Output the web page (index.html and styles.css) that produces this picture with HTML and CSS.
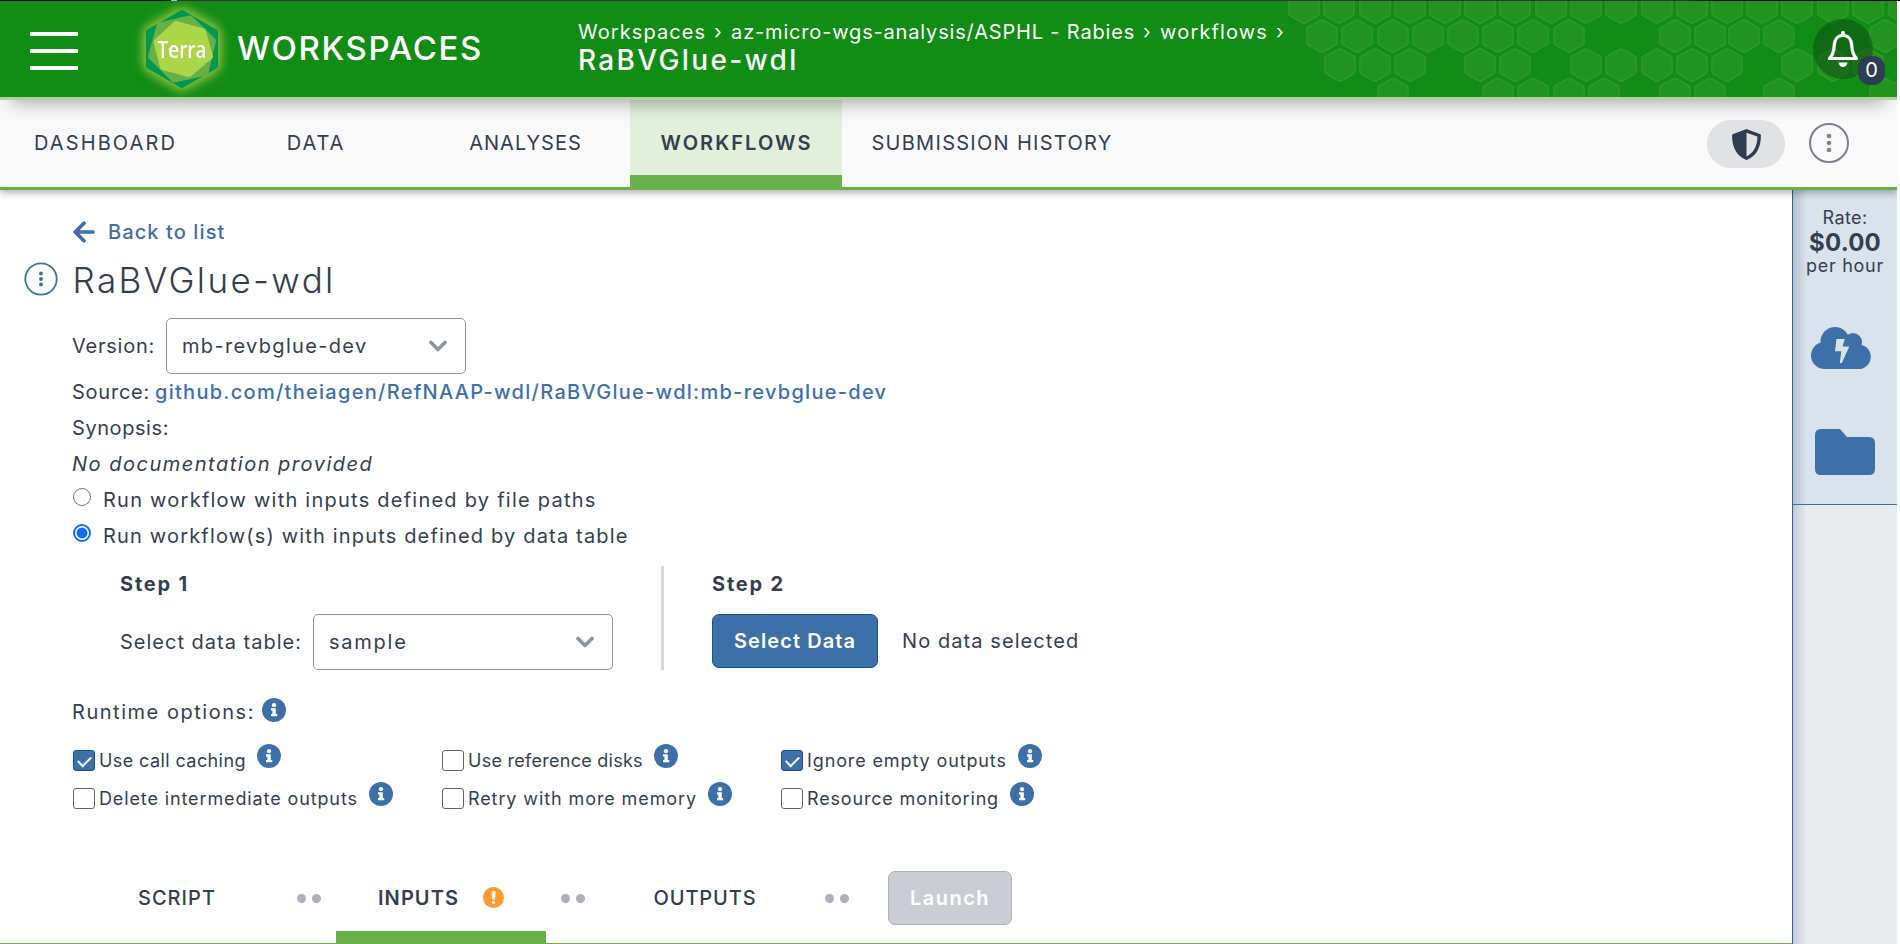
FILE: index.html
```html
<!DOCTYPE html>
<html lang="en">
<head>
<meta charset="utf-8">
<title>RaBVGlue-wdl</title>
<link rel="stylesheet" href="styles.css">
</head>
<body>
<svg width="0" height="0" class="defs">
  <defs>
    <path id="hex" d="M0 -16.2 Q1 -16.2 2 -15.7 L13.5 -9.2 Q15.3 -8.1 15.3 -6.2 V6.2 Q15.3 8.1 13.5 9.2 L2 15.7 Q0 16.8 -2 15.7 L-13.5 9.2 Q-15.3 8.1 -15.3 6.2 V-6.2 Q-15.3 -8.1 -13.5 -9.2 L-2 -15.7 Q-1 -16.2 0 -16.2Z"/>
    <symbol id="info" viewBox="0 0 24 24"><circle cx="12" cy="12" r="12" fill="#3d70a8"/><circle cx="12" cy="7.2" r="2.1" fill="#fff"/><path d="M9 10.3h4.8v5.6h1.400v2.300H9v-2.300h1.400v-3.300H9z" fill="#fff"/></symbol>
    <symbol id="chev" viewBox="0 0 18 12"><path d="M2 2.5 9 9.5 16 2.5" fill="none" stroke="#8d95a2" stroke-width="3.6" stroke-linecap="round" stroke-linejoin="round"/></symbol>
    <symbol id="kebab" viewBox="0 0 40 40"><circle cx="20" cy="20" r="19" fill="none" stroke="currentColor" stroke-width="2"/><circle cx="20" cy="13" r="2.3" fill="currentColor"/><circle cx="20" cy="20" r="2.3" fill="currentColor"/><circle cx="20" cy="27" r="2.3" fill="currentColor"/></symbol>
  </defs>
</svg>
<div class="strip"></div>
<div class="app">
  <header class="header">
    <svg class="hexes" width="617" height="96" viewBox="1280 1 617 96">
      <g transform="translate(0 7)"><use href="#hex" x="1304"/><use href="#hex" x="1339"/><use href="#hex" x="1375"/><use href="#hex" x="1410"/><use href="#hex" x="1445"/><use href="#hex" x="1480"/><use href="#hex" x="1515"/><use href="#hex" x="1551"/><use href="#hex" x="1586"/><use href="#hex" x="1621"/><use href="#hex" x="1657"/><use href="#hex" x="1692"/><use href="#hex" x="1727"/><use href="#hex" x="1762"/><use href="#hex" x="1797"/><use href="#hex" x="1833"/><use href="#hex" x="1868"/><use href="#hex" x="1904"/></g>
      <g transform="translate(0 36)"><use href="#hex" x="1322"/><use href="#hex" x="1357"/><use href="#hex" x="1393"/><use href="#hex" x="1428"/><use href="#hex" x="1463"/><use href="#hex" x="1498"/><use href="#hex" x="1533"/><use href="#hex" x="1569"/><use href="#hex" x="1675"/><use href="#hex" x="1710"/><use href="#hex" x="1744"/><use href="#hex" x="1779"/><use href="#hex" x="1885"/></g>
      <g transform="translate(0 65)"><use href="#hex" x="1340"/><use href="#hex" x="1375"/><use href="#hex" x="1410"/><use href="#hex" x="1480"/><use href="#hex" x="1515"/><use href="#hex" x="1586"/><use href="#hex" x="1621"/><use href="#hex" x="1657"/><use href="#hex" x="1692"/><use href="#hex" x="1727"/><use href="#hex" x="1797"/><use href="#hex" x="1833"/><use href="#hex" x="1868"/></g>
      <g transform="translate(0 94.5)"><use href="#hex" x="1393"/><use href="#hex" x="1498"/><use href="#hex" x="1533"/><use href="#hex" x="1569"/><use href="#hex" x="1604"/><use href="#hex" x="1675"/><use href="#hex" x="1710"/><use href="#hex" x="1779"/><use href="#hex" x="1885"/></g>
    </svg>
    <div class="burger"><i></i><i></i><i></i></div>
    <svg class="logo" width="72" height="80" viewBox="0 0 72 80">
      <g stroke-width="6" stroke-linejoin="round">
        <path d="M36 4 69 23V57L36 76 3 57V23Z" fill="#00984f" stroke="#00984f"/>
        <path d="M13.500 16.500 44 9.500 67 32 59.500 63.500 28 70.500 5 47.500Z" fill="#67b047" stroke="#67b047"/>
        <path d="M30 15 57 22.500 64 47.500 43 65 17 58 10.500 33Z" fill="#acd548" stroke="#acd548"/>
      </g>
      <text x="11.500" y="49" textLength="49" lengthAdjust="spacingAndGlyphs">Terra</text>
    </svg>
    <div class="brand">WORKSPACES</div>
    <div class="crumbs">
      <div class="trail"><span class="c1">Workspaces</span><span class="sep">›</span><span class="c2">az-micro-wgs-analysis/ASPHL - Rabies</span><span class="sep">›</span><span class="c3">workflows</span><span class="sep">›</span></div>
      <div class="current">RaBVGlue-wdl</div>
    </div>
    <div class="bell">
      <svg width="34" height="38" viewBox="0 0 34 38"><path d="M17 5.500C11 5.500 8.500 10 8.300 15 8 21 6.500 25.500 3.500 28.500H30.500C27.500 25.500 26 21 25.700 15 25.500 10 23 5.500 17 5.500Z" fill="none" stroke="#fff" stroke-width="3.200" stroke-linejoin="round"/><path d="M17 2.600V5" stroke="#fff" stroke-width="3.800" stroke-linecap="round"/><path d="M12.500 32.500H21.500Q20.500 37 17 37T12.500 32.500Z" fill="#fff"/></svg>
      <span class="count">0</span>
    </div>
  </header>
  <nav class="nav">
    <a class="tab n1">DASHBOARD</a><a class="tab n2">DATA</a><a class="tab n3">ANALYSES</a><a class="tab n4 active">WORKFLOWS</a><a class="tab n5">SUBMISSION HISTORY</a>
    <div class="shield"><svg width="29" height="31" viewBox="0 0 29 31"><path d="M14.500 1.800 27.200 6.500C27.200 18 23 25.500 14.500 29.200 6 25.500 1.800 18 1.800 6.500Z" fill="none" stroke="#2e3d51" stroke-width="3.400" stroke-linejoin="round"/><path d="M14.500 1V30C6 26 1.500 18 1.500 6.500Z" fill="#2e3d51"/></svg></div>
    <svg class="menu" width="40" height="40"><use href="#kebab"/></svg>
  </nav>
  <div class="body">
    <main class="main">
      <a class="back"><svg width="22" height="22" viewBox="0 0 22 22"><path d="M11 2.200 2.200 11 11 19.800M2.500 11H20" fill="none" stroke="#3d70a8" stroke-width="3.700" stroke-linecap="round" stroke-linejoin="round"/></svg><span>Back to list</span></a>
      <div class="heading"><svg class="wmenu" width="34" height="34" viewBox="0 0 34 34"><circle cx="17" cy="17" r="15.700" fill="none" stroke="#3d70a8" stroke-width="1.800"/><circle cx="17" cy="11.500" r="1.900" fill="#3d70a8"/><circle cx="17" cy="17" r="1.900" fill="#3d70a8"/><circle cx="17" cy="22.500" r="1.900" fill="#3d70a8"/></svg><h1>RaBVGlue-wdl</h1></div>
      <div class="field version"><label>Version:</label><div class="select"><span class="v1">mb-revbglue-dev</span><svg width="18" height="12"><use href="#chev"/></svg></div></div>
      <div class="line"><span class="src">Source:</span><a class="link">github.com/theiagen/RefNAAP-wdl/RaBVGlue-wdl:mb-revbglue-dev</a></div>
      <div class="line syn">Synopsis:</div>
      <div class="line nodoc">No documentation provided</div>
      <div class="line option r1"><i class="radio"></i><span>Run workflow with inputs defined by file paths</span></div>
      <div class="line option r2"><i class="radio on"></i><span>Run workflow(s) with inputs defined by data table</span></div>
      <div class="steps">
        <section class="step one">
          <h2>Step 1</h2>
          <div class="field"><label>Select data table:</label><div class="select"><span class="v2">sample</span><svg width="18" height="12"><use href="#chev"/></svg></div></div>
        </section>
        <section class="step two">
          <h2>Step 2</h2>
          <div class="pick"><button class="primary">Select Data</button><span>No data selected</span></div>
        </section>
      </div>
      <div class="line runtime"><span>Runtime options:</span><svg class="info" width="24" height="24"><use href="#info"/></svg></div>
      <div class="checks">
        <div class="check k1"><i class="box on"></i><span>Use call caching</span><svg class="info" width="24" height="24"><use href="#info"/></svg></div>
        <div class="check k2"><i class="box"></i><span>Use reference disks</span><svg class="info" width="24" height="24"><use href="#info"/></svg></div>
        <div class="check k3"><i class="box on"></i><span>Ignore empty outputs</span><svg class="info" width="24" height="24"><use href="#info"/></svg></div>
        <div class="check k4"><i class="box"></i><span>Delete intermediate outputs</span><svg class="info" width="24" height="24"><use href="#info"/></svg></div>
        <div class="check k5"><i class="box"></i><span>Retry with more memory</span><svg class="info" width="24" height="24"><use href="#info"/></svg></div>
        <div class="check k6"><i class="box"></i><span>Resource monitoring</span><svg class="info" width="24" height="24"><use href="#info"/></svg></div>
      </div>
      <div class="flow">
        <div class="ftab f1">SCRIPT</div>
        <div class="dots"><i></i><i></i></div>
        <div class="ftab f2"><span>INPUTS</span><svg width="21" height="21" viewBox="0 0 21 21"><circle cx="10.500" cy="10.500" r="10.500" fill="#ff9a2e"/><path d="M9 4.500H12L11.600 12H9.400Z" fill="#fff" stroke="#fff" stroke-linejoin="round"/><circle cx="10.500" cy="15.400" r="1.700" fill="#fff"/></svg></div>
        <div class="dots"><i></i><i></i></div>
        <div class="ftab f3">OUTPUTS</div>
        <div class="dots"><i></i><i></i></div>
        <button class="launch" disabled>Launch</button>
      </div>
    </main>
    <aside class="side">
      <div class="panel">
        <div class="rate">Rate:</div>
        <div class="price">$0.00</div>
        <div class="per">per hour</div>
        <svg class="cloud" width="60" height="42" viewBox="0 0 60 42"><g fill="#3d70a8"><circle cx="13.500" cy="28.500" r="13.500"/><circle cx="24" cy="14.500" r="14.500"/><circle cx="42" cy="15" r="9"/><circle cx="47.500" cy="29.700" r="12.300"/><path d="M13.500 16H44L48 25V42H13.500Z"/></g><path d="M25.500 12H33.800L31.500 19.500H38.300L30.800 36H28.800L30.300 24.200H24Z" fill="#d9e3ed"/></svg>
        <svg class="folder" width="60" height="46" viewBox="0 0 60 46"><path d="M6 0H25L32 8H54Q60 8 60 14V40Q60 46 54 46H6Q0 46 0 40V6Q0 0 6 0Z" fill="#3d70a8"/></svg>
      </div>
    </aside>
  </div>
</div>
</body>
</html>
```
FILE: styles.css
```css
* { box-sizing: border-box; }
body { margin: 0; background: #fff; color: #333f50; font: 400 20px/36px Inter, sans-serif; overflow: hidden; }
h1, h2 { margin: 0; }
svg { display: block; flex: none; }
i { display: block; flex: none; }
.defs { position: absolute; }
.strip { height: 1px; background: linear-gradient(90deg, #000 171px, #9bc0e6 171px 177px, #38303a 177px 1686px, #000 1722px); }
.app { width: 1897px; height: 943px; display: flex; flex-direction: column; overflow: hidden; }

.header { position: relative; z-index: 3; height: 99px; flex: none; display: flex; background: #118c15; border-bottom: 3px solid #aed49a; color: #fff; box-shadow: 0 14px 18px -12px rgba(0,0,0,.36); padding-left: 30px; }
.hexes { position: absolute; right: 0; top: 0; fill: #6ab04a; fill-opacity: .2; stroke: #8fc97a; stroke-opacity: .17; stroke-width: 1.5; }
.burger { width: 48px; padding-top: 31px; display: flex; flex-direction: column; gap: 13px; }
.burger i { height: 4px; background: #fff; border-radius: 1px; }
.logo { margin: 8px 0 0 68px; overflow: visible; filter: drop-shadow(0 0 6px #8fc63d) drop-shadow(0 0 4px #7fb93d); }
.logo text { font: 600 24px "Open Sans", sans-serif; fill: #fff; }
.brand { width: 341px; margin-left: 19px; font-size: 33px; font-weight: 500; letter-spacing: 1.66px; line-height: 94px; white-space: nowrap; }
.crumbs { padding-top: 18px; white-space: nowrap; }
.trail { display: flex; line-height: 26px; }
.c1 { letter-spacing: 1.07px; }
.c2 { letter-spacing: .83px; }
.c3 { letter-spacing: 1.15px; }
.sep { width: 17px; margin-left: 8px; }
.current { font-size: 28px; font-weight: 500; letter-spacing: 2.35px; line-height: 30px; }
.bell { position: absolute; right: 24px; top: 18px; width: 60px; height: 60px; padding: 11px 13px; border-radius: 50%; background: rgba(14,78,20,.55); }
.count { position: absolute; left: 45px; top: 37px; width: 27px; height: 29px; border-radius: 12px; background: #2e3d51; text-align: center; line-height: 28px; font-size: 20px; }

.nav { position: relative; z-index: 2; height: 90px; flex: none; display: flex; align-items: center; background: #fafafa; border-bottom: 3px solid #6ab04a; box-shadow: 0 3px 7px rgba(0,0,0,.3); }
.tab { width: 210px; height: 87px; line-height: 87px; text-align: center; white-space: nowrap; }
.n1 { letter-spacing: 2.12px; padding-left: 1px; }
.n2 { letter-spacing: 1.9px; padding-left: 2px; }
.n3 { letter-spacing: 1px; padding-left: 1px; }
.n4 { letter-spacing: 2.06px; padding-left: 1px; }
.n5 { width: 300px; letter-spacing: 1.29px; }
.active { width: 212px; font-weight: 600; background: #e1efdb; border-bottom: 12px solid #6ab04a; }
.shield { width: 78px; height: 48px; margin: 1px 24px 0 auto; border-radius: 24px; background: #e1e2e6; display: flex; align-items: center; justify-content: center; }
.menu { margin: 0 48px 1px 0; color: #79828f; }

.body { flex: 1; display: flex; min-height: 0; }
.main { flex: 1; padding: 24px 0 0; display: flex; flex-direction: column; min-width: 0; }
.back { display: flex; align-items: center; gap: 13px; height: 36px; padding-left: 73px; color: #3d70a8; font-weight: 500; letter-spacing: 1.1px; }
.heading { display: flex; height: 61px; padding-left: 23.500px; }
.wmenu { margin-top: 11.500px; }
h1 { margin-left: 15px; font-size: 35px; font-weight: 300; letter-spacing: 2.4px; line-height: 61px; }
.field { display: flex; align-items: center; height: 56px; }
.version { margin-top: 7px; padding-left: 72px; }
.version label { width: 94px; letter-spacing: .76px; }
.select { width: 300px; height: 56px; border: 1px solid #8a93a1; border-radius: 5px; padding: 0 18px 0 15px; display: flex; align-items: center; justify-content: space-between; }
.v1 { letter-spacing: 1.33px; }
.v2 { letter-spacing: 1.75px; }
.line { height: 36px; padding-left: 72px; display: flex; white-space: nowrap; }
.src { width: 83px; letter-spacing: .76px; }
.link { color: #3d70a8; font-weight: 500; letter-spacing: 1.28px; }
.syn { letter-spacing: .57px; }
.nodoc { font-style: italic; letter-spacing: 1.5px; }
.option { padding-left: 73px; gap: 12px; }
.radio { width: 18px; height: 18px; margin-top: 6px; border: 1.500px solid #767676; border-radius: 50%; }
.radio.on { border: 2px solid #0d6ff5; background: radial-gradient(circle, #0d6ff5 5px, #fff 5.800px); }
.r1 { letter-spacing: 1.24px; }
.r2 { letter-spacing: 1.17px; }
.steps { display: flex; height: 104px; margin-top: 12px; padding-left: 120px; }
.step h2 { height: 48px; font-size: 20px; line-height: 36px; letter-spacing: 1.8px; font-weight: 700; }
.one { width: 544px; border-right: 3px solid #d5d9dd; }
.one label { width: 193px; letter-spacing: 1px; }
.two { padding-left: 48px; }
.pick { display: flex; align-items: center; gap: 24px; letter-spacing: 1.08px; }
button { font: 600 20px/52px Inter, sans-serif; padding: 0; height: 54px; border-radius: 7px; color: #fff; }
.primary { width: 166px; border: 1px solid #0c5697; background: #3d70a8; letter-spacing: 1.08px; }
.runtime { margin-top: 24px; gap: 7px; letter-spacing: 1.53px; }
.runtime .info { margin-top: 4px; }
.checks { display: grid; grid-template-columns: 369px 339px 330px; grid-template-rows: 38px 37px; margin-top: 12px; padding-left: 73px; font-size: 18px; }
.check { display: flex; height: 38px; line-height: 37px; white-space: nowrap; }
.box { width: 22px; height: 21px; margin: 8px 4px 0 0; border: 1.500px solid #5a6573; border-radius: 3px; }
.box.on { border-color: #0c5697; background: #3d70a8; display: grid; place-items: center; }
.box.on::after { content: ""; width: 11px; height: 6px; border: solid #fff; border-width: 0 0 2.400px 2.400px; transform: translateY(-1px) rotate(-45deg); }
.check .info { margin: 2px 0 0 11px; }
.k1 { letter-spacing: .41px; }
.k2 { letter-spacing: .27px; }
.k3 { letter-spacing: .88px; }
.k4 { letter-spacing: .88px; }
.k5 { letter-spacing: .9px; }
.k6 { letter-spacing: .83px; }
.flow { margin-top: auto; height: 91px; border-bottom: 1px solid #6ab04a; padding-left: 72px; display: flex; align-items: center; }
.ftab { height: 90px; line-height: 90px; font-weight: 500; text-align: center; }
.f1 { width: 210px; letter-spacing: 1.02px; }
.f2 { width: 210px; font-weight: 600; letter-spacing: 1.08px; border-bottom: 12px solid #6ab04a; display: flex; align-items: center; gap: 24px; padding: 11px 0 0 42px; line-height: 36px; }
.f3 { width: 210px; letter-spacing: .89px; }
.dots { width: 54px; display: flex; gap: 6px; padding-left: 15px; }
.dots i { width: 9px; height: 9px; border-radius: 50%; background: #abb1ba; }
.launch { width: 124px; border: 1px solid #aeb3bb; background: #cacdd3; letter-spacing: 1.47px; margin-left: 24px; }

.side { width: 105px; border-left: 1px solid #2f6299; background: linear-gradient(90deg, rgba(60,70,90,.2), transparent 14px), #e8ecef; }
.panel { height: 315px; border-bottom: 1px solid #3d70a8; background: linear-gradient(90deg, rgba(60,70,90,.08), transparent 14px), #d9e3ed; padding-top: 15px; text-align: center; }
.panel { background: linear-gradient(90deg, rgba(60,70,90,.22), transparent 14px), #d9e3ed; }
.rate { font-size: 18px; line-height: 26px; letter-spacing: .4px; }
.price { font-size: 24px; font-weight: 700; line-height: 23px; letter-spacing: .2px; }
.per { font-size: 18px; line-height: 23px; letter-spacing: .72px; }
.cloud { margin: 50px 0 0 18px; }
.folder { margin: 60px 0 0 22px; }
```
